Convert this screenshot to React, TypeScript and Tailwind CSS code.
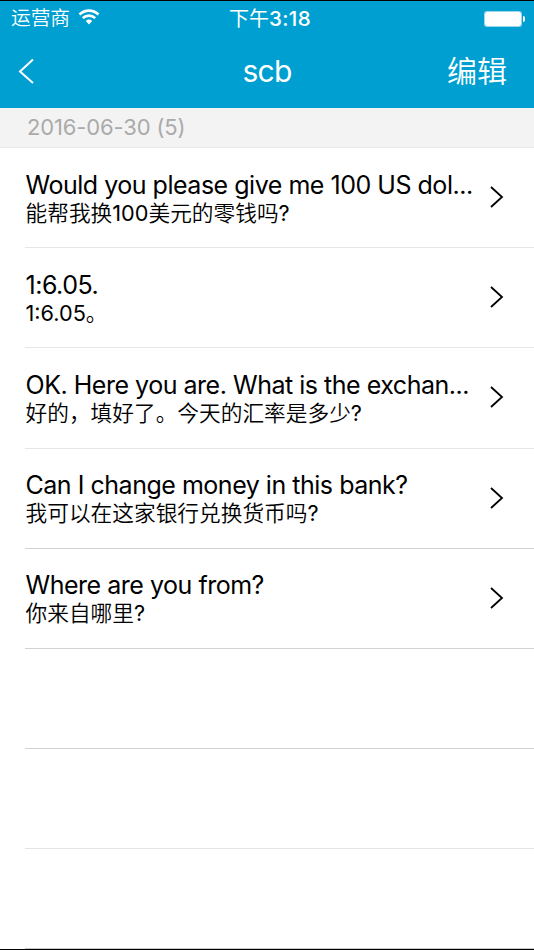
import type { ReactNode } from 'react';

interface Phrase {
  en: string;
  zh: string;
}

const phrases: Phrase[] = [
  { en: 'Would you please give me 100 US dol...', zh: '能帮我换100美元的零钱吗?' },
  { en: '1:6.05.', zh: '1:6.05。' },
  { en: 'OK. Here you are. What is the exchan...', zh: '好的，填好了。今天的汇率是多少?' },
  { en: 'Can I change money in this bank?', zh: '我可以在这家银行兑换货币吗?' },
  { en: 'Where are you from?', zh: '你来自哪里?' },
];

function Row({ children }: { children?: ReactNode }) {
  return (
    <li className="ml-[25px] flex h-[100.2px] items-center border-b border-[#d2d2d4] nth-[-n+3]:border-[#e6e6e6] nth-7:border-[#e4e4e4]">
      {children}
    </li>
  );
}

function MixedText({ text }: { text: string }) {
  return text.split(/([\d:.?]+)/).map((part, i) =>
    i % 2 ? <span key={i} className="font-normal">{part}</span> : part
  );
}

export default function App() {
  return (
    <div className="flex h-[950px] w-[534px] flex-col overflow-hidden border-y border-black bg-white font-['Inter','Noto_Sans_CJK_SC',sans-serif] text-black">
      <header className="h-[107px] shrink-0 bg-[#009fd1] text-white">
        <div className="grid h-[36px] grid-cols-3 items-center pr-[9px] pl-[11px]">
          <div className="flex items-center gap-2 text-[19.7px] font-[350]">
            <span>运营商</span>
            <svg className="-mt-[3px]" width="22" height="16" viewBox="0 0 22 16" fill="none" stroke="currentColor" strokeWidth="2.6">
              <path d="M1.5 5.5a13.6 13.6 0 0 1 19 0M4.8 9.2a8.8 8.8 0 0 1 12.4 0" />
              <path d="M11 15.5l-3.2-3.4a4.7 4.7 0 0 1 6.4 0z" fill="currentColor" stroke="none" />
            </svg>
          </div>
          <span className="pl-[4px] text-center text-[20px] whitespace-nowrap">
            下午<span className="text-[20.5px] font-[550] tracking-[0.4px]">3:18</span>
          </span>
          <div className="flex items-center justify-end gap-px">
            <div className="h-[16px] w-[38px] rounded-[3px] border border-white/60 bg-white bg-clip-padding" />
            <div className="h-[6px] w-[2px] rounded-r bg-white" />
          </div>
        </div>
        <div className="grid h-[69px] grid-cols-3 items-center px-[27px] text-[30px] font-[350]">
          <svg className="-mt-[2px] -ml-[9px]" width="18" height="28" viewBox="0 0 18 28" fill="none" stroke="currentColor" strokeWidth="2">
            <path d="M15 2.5L2 14.5l13 11.5" />
          </svg>
          <h1 className="text-center font-normal tracking-[-0.8px]">scb</h1>
          <button className="text-right">编辑</button>
        </div>
      </header>
      <div className="flex h-[40px] shrink-0 items-center border-b border-[#e9e9e9] bg-[#f3f3f3] pl-[27px] text-[22px] tracking-[-0.15px] text-[#aaa]">
        2016-06-30 (5)
      </div>
      <ul>
        {phrases.map((phrase) => (
          <Row key={phrase.zh}>
            <div className="w-[448px] pt-[2px] pl-[0.5px] whitespace-nowrap">
              <p className="text-[25px] leading-[28px] tracking-[-0.48px]">{phrase.en}</p>
              <p className="text-[21.7px] leading-[28px] font-[350]">
                <MixedText text={phrase.zh} />
              </p>
            </div>
            <svg className="-mt-px ml-[16px]" width="16" height="24" viewBox="0 0 16 24" fill="none" stroke="currentColor" strokeWidth="1.8">
              <path d="M2 2l11 10L2 22" />
            </svg>
          </Row>
        ))}
        <Row />
        <Row />
      </ul>
      <div className="mt-auto ml-[25px] h-px shrink-0 bg-[#c8c8cc]" />
    </div>
  );
}
